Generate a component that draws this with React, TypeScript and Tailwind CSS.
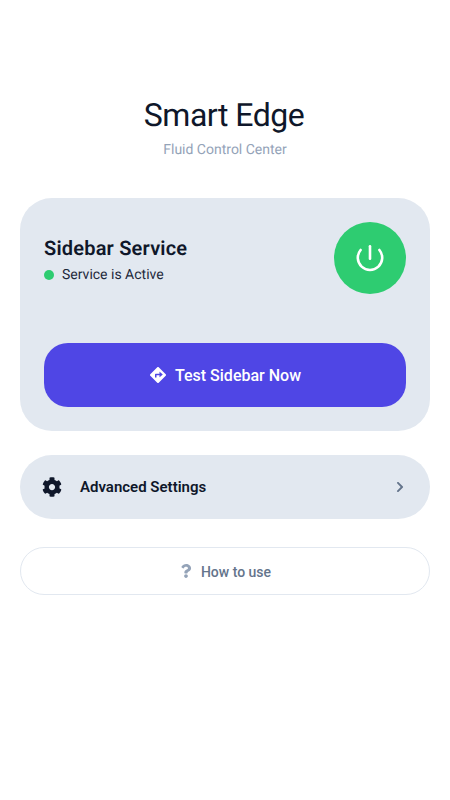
import { FaChevronRight, FaCog, FaDirections, FaQuestion } from "react-icons/fa";

export default function App() {
    return (
        <div className="min-h-[800px] bg-white px-5 pt-[94px] font-['Roboto',sans-serif] [text-rendering:geometricPrecision]">
            <div className="flex flex-col items-center">
                <h1 className="pr-[2px] text-[32px] leading-[42px] font-normal tracking-[-0.5px] text-[#0f172a]">Smart Edge</h1>
                <p className="mt-1 text-sm leading-5 text-[#94a3b8]">Fluid Control Center</p>
            </div>

            <div className="mt-[38px] rounded-[32px] bg-[#e2e8f0] p-6">
                <div className="flex items-start justify-between">
                    <div className="pt-[13px]">
                        <h2 className="text-xl leading-[26px] font-semibold tracking-[0.2px] text-[#0f172a]">Sidebar Service</h2>
                        <div className="mt-1 flex items-center gap-2">
                            <span className="h-[10px] w-[10px] rounded-full bg-[#2ecc71]" />
                            <span className="text-sm leading-5 text-[#1e293b]">Service is Active</span>
                        </div>
                    </div>
                    <div className="flex h-[72px] w-[72px] items-center justify-center rounded-full bg-[#2ecc71]">
                        <svg width="32" height="32" viewBox="0 0 32 32" fill="none" stroke="white" strokeWidth="2.6" strokeLinecap="round">
                            <path d="M16 4.3V16.7" />
                            <path d="M6.6 8a12.2 12.2 0 1 0 18.8 0" />
                        </svg>
                    </div>
                </div>
                <button className="mt-[49px] flex h-16 w-full items-center justify-center gap-[9px] rounded-3xl bg-[#4f46e5] pl-px text-base font-medium text-white">
                    <FaDirections className="h-4 w-4" />
                    <span className="pt-px">Test Sidebar Now</span>
                </button>
            </div>

            <button className="mt-6 flex h-16 w-full items-center rounded-[32px] bg-[#e2e8f0] pr-6 pl-[22px]">
                <FaCog className="h-5 w-5 text-[#0f172a]" />
                <span className="ml-[18px] flex-1 text-left text-[15px] font-semibold text-[#0f172a]">Advanced Settings</span>
                <FaChevronRight className="h-3 w-3 text-[#64748b]" />
            </button>

            <button className="mt-7 flex h-12 w-full items-center justify-center gap-2 rounded-3xl border border-[#e2e8f0] bg-white text-sm font-medium text-[#64748b]">
                <FaQuestion className="h-[14px] w-[14px] text-[#94a3b8]" />
                <span className="pt-px">How to use</span>
            </button>
        </div>
    );
}
